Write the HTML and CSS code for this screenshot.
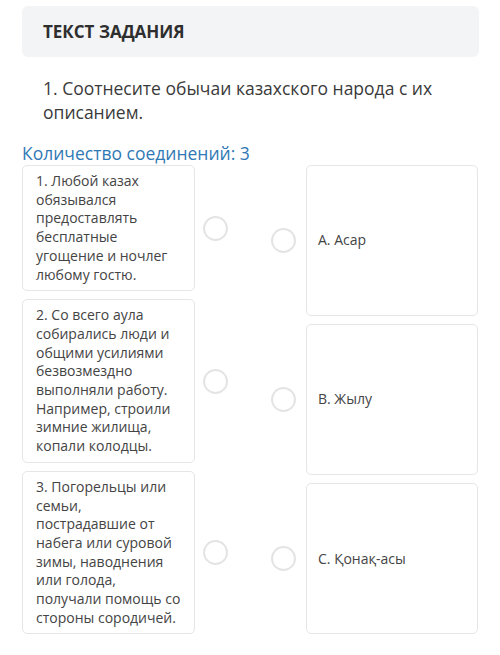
FILE: index.html
```html
<!DOCTYPE html>
<html lang="ru">
<head>
	<meta charset="UTF-8">
	<title>Текст задания</title>
	<link rel="stylesheet" href="styles.css">
</head>
<body>
	<div class="page">
		<div class="task-head">ТЕКСТ ЗАДАНИЯ</div>

		<p class="question">1. Соотнесите обычаи казахского народа с их описанием.</p>

		<div class="count">Количество соединений: 3</div>

		<div class="match">
			<div class="side side-left">
				<div class="item">
					<div class="card">1. Любой казах обязывался предоставлять бесплатные угощение и ночлег любому гостю.</div>
					<span class="dot"></span>
				</div>
				<div class="item">
					<div class="card">2. Со всего аула собирались люди и общими усилиями безвозмездно выполняли работу. Например, строили зимние жилища, копали колодцы.</div>
					<span class="dot"></span>
				</div>
				<div class="item">
					<div class="card">3. Погорельцы или семьи, пострадавшие от набега или суровой зимы, наводнения или голода, получали помощь со стороны сородичей.</div>
					<span class="dot"></span>
				</div>
			</div>

			<div class="side side-right">
				<div class="item">
					<span class="dot"></span>
					<div class="card">А. Асар</div>
				</div>
				<div class="item">
					<span class="dot"></span>
					<div class="card">В. Жылу</div>
				</div>
				<div class="item">
					<span class="dot"></span>
					<div class="card">С. Қонақ-асы</div>
				</div>
			</div>
		</div>
	</div>
</body>
</html>
```

FILE: styles.css
```css
body {
	margin: 0;
	background-color: #ffffff;
	font-family: "Open Sans", "Noto Sans", sans-serif;
	color: #3a3a3a;
}

.page {
	padding: 6px 21px 0 22px;
}

.task-head {
	height: 51px;
	line-height: 51px;
	padding-left: 21px;
	background-color: #f3f4f6;
	border-radius: 6px;
	font-size: 17px;
	font-weight: 700;
	color: #2e2e2e;
}

.question {
	margin: 19px 0 0 21px;
	font-size: 17.5px;
	line-height: 24px;
	color: #3a3a3a;
}

.count {
	margin-top: 17px;
	font-size: 17.5px;
	line-height: 24px;
	color: #3179b5;
}

.match {
	display: flex;
	gap: 43px;
}

.side {
	display: flex;
	flex-direction: column;
	gap: 8px;
}

.side-left {
	width: 206px;
}

.side-right {
	width: 207px;
}

.item {
	display: flex;
	align-items: center;
}

.side-right .item {
	flex: 1;
	align-items: stretch;
}

.side-right .dot {
	align-self: center;
}

.card {
	border: 1px solid #e6e6e6;
	border-radius: 5px;
	background-color: #ffffff;
	font-size: 14px;
	line-height: 18.7px;
	color: #444444;
}

.side-left .card {
	width: 145px;
	padding: 6px 13px;
	margin-right: 8px;
}

.side-right .card {
	flex: 1;
	display: flex;
	align-items: center;
	padding: 0 11px;
	margin-left: 10px;
}

.dot {
	flex: none;
	width: 21px;
	height: 21px;
	border: 2px solid #e4e4e4;
	border-radius: 50%;
}
```
